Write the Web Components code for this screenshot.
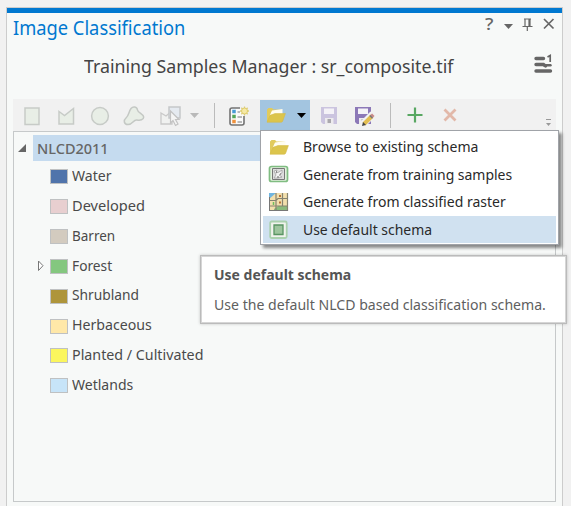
<!DOCTYPE html>
<html lang="en">
<head>
<meta charset="utf-8">
<title>Image Classification</title>
<style>
html,body{margin:0;height:100%;overflow:hidden;background:#f1f1f1}
body{font-family:"Noto Sans","Open Sans",sans-serif;color:#444}
</style>
</head>
<body>
<classification-pane></classification-pane>
<script>
customElements.define('fit-text', class extends HTMLElement {
  connectedCallback() {
    const r = this.attachShadow({mode:'open'});
    r.innerHTML = `<style>:host{display:block;white-space:nowrap;flex:none}span{display:inline-block;transform-origin:0 50%;vertical-align:top}</style><span><slot></slot></span>`;
    const w = +this.getAttribute('w'), s = r.querySelector('span');
    this.style.width = w + 'px';
    s.style.transform = `scaleX(${w / s.offsetWidth})`;
  }
});

const folder = `<path d="M2 17V4.500L3.500 3H7L8.500 4.500H17V9" fill="#e1cb5d"/><path d="M4 12L7 5.500L17.500 4V10H5Z" fill="#fffdf0"/><path d="M2 17.200L5.200 10.200L10 8.600H20.400L17.500 16.500Q17.200 17.200 16 17.200Z" fill="#dcc54c" stroke="#d3bb47" stroke-width=".6"/>`;
const disk = `<path d="M2 2H18V19H4L2 17Z" fill="currentColor"/><path d="M5 3.500H15V9H5Z" fill="#f4f2f7"/><path d="M6 13H14.500V19H6Z" fill="#edebee"/><path d="M8.500 14H12V18H8.500Z" fill="#aaa8ad"/>`;
const ICONS = {
  rect:`<path d="M3 3H17V19.500H3Z" fill="#e8eee6" stroke="#c7cbc7" stroke-width="1.500"/>`,
  poly:`<path d="M3 6.500L8.500 10.500L17.500 3.500V19H3Z" fill="#e8eee6" stroke="#c7cbc7" stroke-width="1.500"/>`,
  circle:`<circle cx="10" cy="11" r="8.400" fill="#e8eee6" stroke="#c7cbc7" stroke-width="1.500"/>`,
  blob:`<path d="M7 3.500C9 1 13 1.500 13.500 5C14 8 19.500 9 19.700 12C19.700 15 16 15.500 13 15C9 14.500 9 19.500 4 19.500C-.5 19.500-.5 15 2 13C5 10.500 4.500 7 7 3.500Z" fill="#e8eee6" stroke="#c4c8c4" stroke-width="1.500"/>`,
  select:`<path d="M1 8L6 11L12 6V19H1Z" fill="#f0f1f0" stroke="#c9c9c9" stroke-width="1.300"/><path d="M9 2H20V13H9Z" fill="#e5eaf0" stroke="#c5c7c9" stroke-width="1.500"/><path d="M10.500 6V18L13 15.500L15.500 20.500L18 19L15.500 14.500H19Z" fill="#f5f5f5" stroke="#c2c2c2" stroke-width="1.200"/>`,
  caret:`<path d="M0 2H9L4.500 7Z" fill="currentColor"/>`,
  schema:`<path d="M12 3H4Q2 3 2 5V18Q2 20 4 20H14Q16 20 16 18V11" fill="#fafafa" stroke="#737373" stroke-width="1.600"/><g stroke="#fff" stroke-width=".5"><path d="M4 4.500h4v4h-4z" fill="#489bd4"/><path d="M4 9.500h4v4h-4z" fill="#54a65a"/><path d="M4 14.500h4v4h-4z" fill="#ef913c"/></g><path d="M9.500 7H12M9.500 12H14M9.500 17H14" stroke="#777" stroke-width="1.200"/><path d="M16.500 1.500V10.500M12 6H21M13.300 2.800L19.700 9.200M19.700 2.800L13.300 9.200" stroke="#dccd7c" stroke-width="1.300"/><circle cx="16.500" cy="6" r="3" fill="#f5e9a6" stroke="#dfcb69"/>`,
  folder,
  disk,
  diskedit:`${disk}<path d="M9 20L20 9" stroke="#f2f1f2" stroke-width="7"/><path d="M11 19L19 11" stroke="#e2bd51" stroke-width="4"/><path d="M9 21L10 17L13 20Z" fill="#444"/><path d="M18 9.500L20.500 12" stroke="#c98989" stroke-width="3"/><path d="M16.800 10.500L19.500 13.200" stroke="#777" stroke-width="1.300"/>`,
  plus:`<path d="M10 2.500V17.500M2.500 10H17.500" stroke="#58a762" stroke-width="2.200"/>`,
  cross:`<path d="M4.500 4.500L15.500 15.500M15.500 4.500L4.500 15.500" stroke="#e2b8a9" stroke-width="2.800"/>`,
  overflow:`<path d="M1 .5H6" stroke="#999"/><path d="M1 4H6L3.500 7Z" fill="#999"/>`,
  samples:`<rect x="1.500" y="1.500" width="18" height="15" rx="2" fill="#e4f1df" stroke="#80bd82" stroke-width="1.700"/><path d="M4.500 3.500H16.500V14.500H4.500Z" fill="#ddd" stroke="#777"/><path d="M6 6L9 5L8 8L11 7L14 5V8L11 10L14 12L10 13L6 13L8 10Z" fill="#f4f4f4" stroke="#999" stroke-width=".7"/><path d="M8 7h1M12 9h1M9 12h2" stroke="#666"/>`,
  raster:`<path d="M1 1H20V19H1Z" fill="#f2dfad"/><path d="M1 1H8L1 7Z" fill="#71b5df"/><path d="M6 19V17L10 14H20V19Z" fill="#8aba7b"/><path d="M1 8.500H8L10 6.500H20M8 1V19M14.500 1V14M1 14H20M19.500 1V19" fill="none" stroke="#858370" stroke-width="1.200"/><path d="M1.500 5V18.500M1 18.500H20" stroke="#777"/><path d="M11 3h2v2h-2zM11 9.500h2v2h-2z" fill="#b67236"/><path d="M5.500 10V13" stroke="#6fbd5e" stroke-width="1.500"/>`,
  default:`<rect x="2.200" y="1.500" width="16.500" height="16.500" rx="1.500" fill="#f1f3ee" stroke="#aad1ae" stroke-width="1.800"/><path d="M6 5H15V14.500H6Z" fill="#9dc59d" stroke="#589462" stroke-width="1.300"/>`,
  pin:`<path d="M3 1H10M4 1V8M8 1V8M9 1V8M1.500 8.500H11.500M6.300 9V13" fill="none" stroke="#666" stroke-width="1.200"/>`,
  close:`<path d="M1 1L10.500 10.500M10.500 1L1 10.500" stroke="#666" stroke-width="1.700"/>`,
  list:`<path d="M2 4.500H9.500M2 10.500H9.500L11.500 12M2 17H16.500" fill="none" stroke="#666" stroke-width="3.400" stroke-linecap="round"/><path d="M10 11.200H16.500" stroke="#666" stroke-width="2.400" stroke-linecap="round"/><path d="M13.500 3L16.200 1.500V8" fill="none" stroke="#666" stroke-width="1.700"/>`,
  open:`<path d="M8 0V8H0Z" fill="#666"/>`,
  shut:`<path d="M1.500 1V10.500L6 5.700Z" fill="#fff" stroke="#777"/>`
};
customElements.define('ui-icon', class extends HTMLElement {
  connectedCallback() {
    const [w,h] = (this.getAttribute('size') || '21 21').split(' ');
    this.attachShadow({mode:'open'}).innerHTML = `<style>:host{display:block;flex:none;width:${w}px;height:${h}px}svg{display:block;overflow:visible}</style><svg width="${w}" height="${h}" viewBox="0 0 ${w} ${h}" fill="none">${ICONS[this.getAttribute('name')]}</svg>`;
  }
});

customElements.define('pane-header', class extends HTMLElement {
  connectedCallback() {
    this.attachShadow({mode:'open'}).innerHTML = `<style>
    :host{display:block;height:86px}
    .top{display:flex;align-items:flex-start;height:33px;padding-left:6px;color:#666}
    .title{color:#0078d0;font-size:19.500px;line-height:30px}
    .q{margin-left:299px;font:500 15.500px/23px "Noto Sans",sans-serif}
    .sub{display:flex;color:#444;font-size:18.200px;line-height:40px;padding-left:77px}
    .car{margin:9px 0 0 11px}.pin{margin:5px 0 0 8px}.x{margin:5px 0 0 9px}.list{margin:8px 0 0 81px}
    </style><div class="top"><fit-text class="title" w="172.500">Image Classification</fit-text><fit-text class="q" w="8.500">?</fit-text><ui-icon class="car" name="caret" size="9 9"></ui-icon><ui-icon class="pin" name="pin" size="13 14"></ui-icon><ui-icon class="x" name="close" size="12 12"></ui-icon></div>
    <div class="sub"><fit-text w="369">Training Samples Manager : sr_composite.tif</fit-text><ui-icon class="list" name="list" size="19 20"></ui-icon></div>`;
  }
});

customElements.define('tool-bar', class extends HTMLElement {
  connectedCallback() {
    this.attachShadow({mode:'open'}).innerHTML = `<style>
    :host{display:flex;align-items:center;height:32px;margin:0 6px;background:#f1f1f1;box-sizing:border-box;padding-left:9px}
    ui-icon{margin-right:13px}
    .sep{width:1px;height:25px;background:#bbb;flex:none}
    .drop{display:flex;align-items:center;width:50px;height:31px;align-self:flex-end;background:#a3c5e0;box-sizing:border-box;padding-left:5px;color:#000}
    .drop ui-icon{margin:0}.drop .c{margin-left:11px}
    </style>
    <ui-icon name="rect"></ui-icon><ui-icon name="poly"></ui-icon><ui-icon name="circle"></ui-icon><ui-icon name="blob" style="margin-right:15px"></ui-icon><ui-icon name="select" style="margin-right:9px"></ui-icon><ui-icon name="caret" size="9 9" style="color:#b9b9b9;margin-right:15px"></ui-icon><i class="sep"></i>
    <ui-icon name="schema" style="margin:0 11px 0 13px"></ui-icon><div class="drop"><ui-icon name="folder"></ui-icon><ui-icon class="c" name="caret" size="9 9"></ui-icon></div>
    <ui-icon name="disk" style="color:#cbc4df;margin-left:9px"></ui-icon><ui-icon name="diskedit" style="color:#8c78b7;margin-right:16px"></ui-icon><i class="sep"></i><ui-icon name="plus" size="20 20" style="margin:0 15px 0 14px"></ui-icon><ui-icon name="cross" size="20 20" style="margin-right:85px"></ui-icon><ui-icon name="overflow" size="7 9" style="margin:16px 0 0"></ui-icon>`;
  }
});

customElements.define('class-row', class extends HTMLElement {
  connectedCallback() {
    const a = n => this.getAttribute(n);
    this.attachShadow({mode:'open'}).innerHTML = `<style>
    :host{display:flex;height:29.850px;align-items:center;font-size:14.600px;line-height:29px;color:#4a4a4a}
    .tw{width:13px;margin-left:23px;flex:none}
    .sw{box-sizing:border-box;width:18px;height:15px;border:1px solid #bfc1c2;background:${a('color')};margin:0 4px 0 0;flex:none}
    fit-text{margin-top:-2.600px}
    </style><div class="tw">${a('expandable')!==null?'<ui-icon name="shut" size="8 12"></ui-icon>':''}</div><div class="sw"></div><fit-text w="${a('w')}">${a('label')}</fit-text>`;
  }
});

customElements.define('class-tree', class extends HTMLElement {
  connectedCallback() {
    const rows = [['Water','#5074ab',39.5],['Developed','#e8cfd0',73],['Barren','#d3cbbf',43.5],['Forest','#84c77f',40.5],['Shrubland','#ae953a',67],['Herbaceous','#ffe8a8',79.5],['Planted / Cultivated','#fbf65e',131],['Wetlands','#c7e4f8',61.5]];
    this.attachShadow({mode:'open'}).innerHTML = `<style>
    :host{display:block;flex:none;height:371px;margin:0 6px;border:1px solid #c6c9ca;box-sizing:border-box;background:#f7f9f8;padding-top:3px}
    .root{display:flex;align-items:center;height:26px;margin-bottom:.9px}
    .root ui-icon{margin:0 7px 0 4px}
    .sel{flex:1;height:26px;background:#c5dbef;padding-left:4px;color:#666;font-size:14.800px;font-weight:500;line-height:26px}
    </style><div class="root"><ui-icon name="open" size="8 8"></ui-icon><div class="sel"><fit-text w="71.500">NLCD2011</fit-text></div></div>
    ${rows.map(r=>`<class-row label="${r[0]}" color="${r[1]}" w="${r[2]}" ${r[0]==='Forest'?'expandable':''}></class-row>`).join('')}`;
  }
});

customElements.define('schema-menu', class extends HTMLElement {
  connectedCallback() {
    const items = [['folder','Browse to existing schema',175],['samples','Generate from training samples',209.5],['raster','Generate from classified raster',202.5],['default','Use default schema',129]];
    this.attachShadow({mode:'open'}).innerHTML = `<style>
    :host{position:absolute;left:260px;top:130px;width:299px;height:115px;box-sizing:border-box;background:#fff;border:1px solid #a0a3a8;padding:2px;box-shadow:3px 3px 3px rgba(0,0,0,.45);color:#2a2a2a;font-size:14.600px}
    .i{display:flex;align-items:center;height:27.500px;line-height:27px;padding-left:5px}
    .i:last-child{background:#d0e1f0}
    fit-text{margin-left:14px}
    </style>${items.map(i=>`<div class="i"><ui-icon name="${i[0]}" size="21 19"></ui-icon><fit-text w="${i[2]}">${i[1]}</fit-text></div>`).join('')}`;
  }
});

customElements.define('tool-tip', class extends HTMLElement {
  connectedCallback() {
    this.attachShadow({mode:'open'}).innerHTML = `<style>
    :host{position:absolute;left:200px;top:255px;width:367px;height:69px;box-sizing:border-box;background:#fff;border:1px solid #bbb;box-shadow:inset 0 0 0 1px #d6d6d6,0 0 3px rgba(0,0,0,.2);padding:3px 0 0 13px;color:#606060;font-size:14.600px;line-height:30px}
    b{font-weight:700;display:block;color:#555}
    </style><b><fit-text w="137">Use default schema</fit-text></b><fit-text w="332">Use the default NLCD based classification schema.</fit-text>`;
  }
});

customElements.define('classification-pane', class extends HTMLElement {
  connectedCallback() {
    this.attachShadow({mode:'open'}).innerHTML = `<style>
    :host{display:block;height:506px;box-sizing:border-box;padding:7px 8px 0 6px;position:relative}
    .pane{height:499px;box-sizing:border-box;border:1px solid #ccc;border-bottom:0;background:#f7f9f8}
    .bar{height:5px;background:#0078d0}
    </style><div class="pane"><div class="bar"></div><pane-header></pane-header><tool-bar></tool-bar><class-tree></class-tree></div><schema-menu></schema-menu><tool-tip></tool-tip>`;
  }
});
</script>
</body>
</html>
